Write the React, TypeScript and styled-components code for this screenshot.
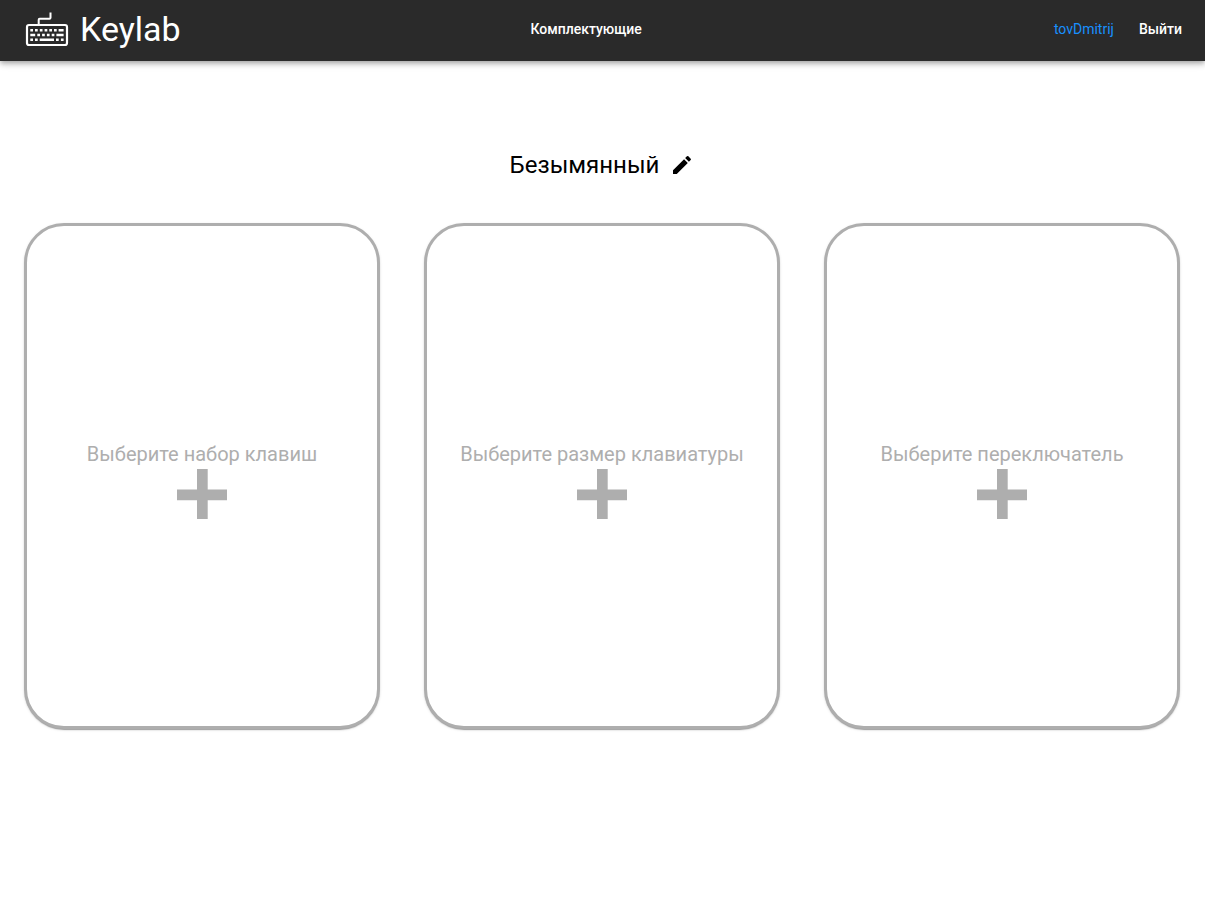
import React from "react";
import styled, { createGlobalStyle } from "styled-components";

const GlobalStyle = createGlobalStyle`
  *, *::before, *::after { box-sizing: border-box; }
  body {
    margin: 0;
    background: #fff;
    color: #000;
    font-family: Roboto, "Liberation Sans", sans-serif;
  }
`;

const Header = styled.header`
  display: grid;
  grid-template-columns: 15fr auto 16fr;
  align-items: center;
  padding: 0 23px 3px 24px;
  height: 61px;
  background: #2a2a2a;
  box-shadow:
    0 2px 4px -1px rgba(0, 0, 0, 0.2),
    0 4px 5px 0 rgba(0, 0, 0, 0.14),
    0 1px 10px 0 rgba(0, 0, 0, 0.12);
`;

const Brand = styled.a`
  display: flex;
  align-items: center;
  gap: 10px;
  color: #fff;
  font-size: 34px;
  line-height: 42px;
  text-decoration: none;
`;

const Account = styled.div`
  display: flex;
  justify-content: flex-end;
  align-items: center;
  gap: 25px;
`;

const NavLink = styled.a<{ $accent?: boolean }>`
  color: ${(p) => (p.$accent ? "#1890ff" : "#fff")};
  font-size: 14px;
  font-weight: ${(p) => (p.$accent ? 400 : 500)};
  line-height: 24px;
  text-decoration: none;
`;

const LogoutButton = styled.button`
  padding: 0;
  border: 0;
  background: none;
  color: #fff;
  font: inherit;
  font-size: 14px;
  font-weight: 500;
  line-height: 24px;
  cursor: pointer;
`;

const Main = styled.main`
  padding: 84px 25px 24px 24px;
`;

const TitleRow = styled.div`
  display: flex;
  justify-content: center;
  align-items: center;
  gap: 11px;
  margin-bottom: 38px;
`;

const Title = styled.h1`
  margin: 0;
  font-size: 24px;
  font-weight: 400;
  line-height: 40px;
`;

const IconButton = styled.button`
  display: flex;
  padding: 0;
  border: 0;
  background: none;
  color: #000;
  cursor: pointer;
`;

const Cards = styled.div`
  display: grid;
  grid-template-columns: repeat(3, 1fr);
  gap: 44px;
`;

const Card = styled.button`
  display: flex;
  flex-direction: column;
  align-items: center;
  justify-content: center;
  gap: 1px;
  min-height: 506px;
  padding: 6px 16px 0;
  border: 3px solid #aeaeae;
  border-radius: 40px;
  background: #fff;
  color: #aeaeae;
  font: inherit;
  font-size: 20px;
  font-weight: 400;
  line-height: 28px;
  box-shadow:
    0 2px 1px -1px rgba(0, 0, 0, 0.2),
    0 1px 1px 0 rgba(0, 0, 0, 0.14),
    0 1px 3px 0 rgba(0, 0, 0, 0.12);
  cursor: pointer;
`;

const KeyboardIcon = () => (
  <svg width="46" height="38" viewBox="0 0 46 38" fill="none" aria-hidden="true">
    <path d="M14.7 15V9.8q0-1 1-1h9.8q1 0 1-1V2.4" stroke="#fff" strokeWidth="2" />
    <rect x="3" y="15" width="40" height="20" rx="2" stroke="#fff" strokeWidth="2.2" />
    <g stroke="#fff" strokeWidth="2.5">
      <path d="M6.3 20.2h2.7M11 20.2h2.7M15.8 20.2h2.7M20.6 20.2h2.7M25.3 20.2h2.7M30 20.2h2.7M34.6 20.2h5" />
      <path d="M6.3 25h4.9M13.3 25h2.7M18.1 25h2.7M22.9 25h2.7M27.7 25h2.7M32.4 25h7.2" />
      <path d="M6.3 29.8h2.7M11 29.8h2.7M15.7 29.8h14.3M32 29.8h2.7M36.9 29.8h2.7" />
    </g>
  </svg>
);

const PencilIcon = () => (
  <svg width="24" height="24" viewBox="0 0 24 24" fill="currentColor" aria-hidden="true">
    <path d="M3 17.25V21h3.75L17.81 9.94l-3.75-3.75L3 17.25zM20.71 7.04c.39-.39.39-1.02 0-1.41l-2.34-2.34a.9959.9959 0 0 0-1.41 0l-1.83 1.83 3.75 3.75 1.83-1.83z" />
  </svg>
);

const PlusIcon = () => (
  <svg width="50" height="50" viewBox="0 0 50 50" fill="currentColor" aria-hidden="true">
    <path d="M20 0h10.7v20.4H50v10.8H30.7V50H20V31.2H0V20.4h20z" />
  </svg>
);

const parts = [
  "Выберите набор клавиш",
  "Выберите размер клавиатуры",
  "Выберите переключатель",
];

export default function App() {
  return (
    <>
      <GlobalStyle />
      <Header>
        <Brand href="#">
          <KeyboardIcon />
          Keylab
        </Brand>
        <nav>
          <NavLink href="#parts">Комплектующие</NavLink>
        </nav>
        <Account>
          <NavLink $accent href="#profile">tovDmitrij</NavLink>
          <LogoutButton type="button">Выйти</LogoutButton>
        </Account>
      </Header>
      <Main>
        <TitleRow>
          <Title>Безымянный</Title>
          <IconButton type="button" aria-label="Изменить название">
            <PencilIcon />
          </IconButton>
        </TitleRow>
        <Cards>
          {parts.map((label) => (
            <Card key={label} type="button">
              {label}
              <PlusIcon />
            </Card>
          ))}
        </Cards>
      </Main>
    </>
  );
}
